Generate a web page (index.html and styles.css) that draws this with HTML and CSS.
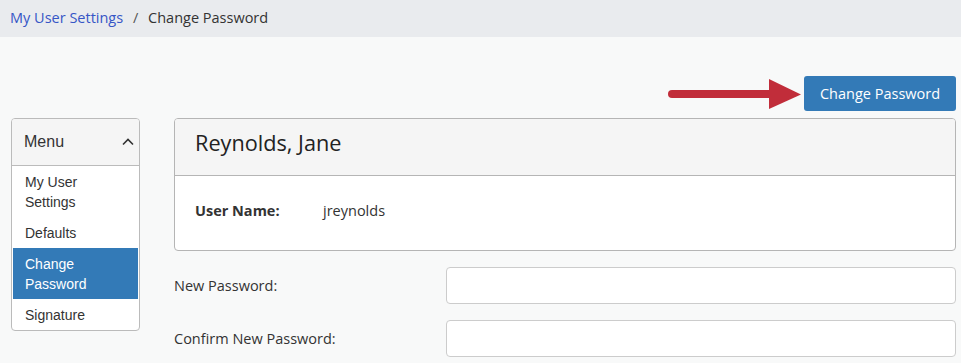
FILE: index.html
```html
<!DOCTYPE html>
<html lang="en">
<head>
  <meta charset="UTF-8">
  <meta name="viewport" content="width=device-width, initial-scale=1.0">
  <title>Change Password</title>
  <link rel="stylesheet" href="styles.css">
</head>
<body>
  <!-- Breadcrumb -->
  <div class="breadcrumb">
    <a href="#">My User Settings</a>
    <span class="sep">/</span>
    <span class="current">Change Password</span>
  </div>

  <div class="page">
    <!-- Toolbar -->
    <div class="toolbar">
      <svg class="arrow" width="134" height="32" viewBox="0 0 134 32">
        <line x1="4" y1="16" x2="104" y2="16" stroke="#c12d3a" stroke-width="8" stroke-linecap="round"/>
        <polygon points="101,1 133,16.5 101,31" fill="#c12d3a"/>
      </svg>
      <button class="btn-primary">Change Password</button>
    </div>

    <div class="layout">
      <!-- Sidebar Menu -->
      <div class="menu">
        <div class="menu-header">
          <span>Menu</span>
          <svg width="12" height="8" viewBox="0 0 12 8">
            <polyline points="1,6.5 6,1.5 11,6.5" fill="none" stroke="#333" stroke-width="1.6"/>
          </svg>
        </div>
        <a class="menu-item" href="#">My User Settings</a>
        <a class="menu-item" href="#">Defaults</a>
        <a class="menu-item active" href="#">Change Password</a>
        <a class="menu-item" href="#">Signature</a>
      </div>

      <!-- Main Content -->
      <div class="main">
        <div class="card">
          <div class="card-header">Reynolds, Jane</div>
          <div class="card-body">
            <span class="field-label">User Name:</span>
            <span class="field-value">jreynolds</span>
          </div>
        </div>

        <div class="form-row">
          <label for="newPassword">New Password:</label>
          <input type="password" id="newPassword">
        </div>
        <div class="form-row">
          <label for="confirmPassword">Confirm New Password:</label>
          <input type="password" id="confirmPassword">
        </div>
      </div>
    </div>
  </div>
</body>
</html>
```

FILE: styles.css
```css
body {
  font-family: "Open Sans", "Segoe UI", sans-serif;
  font-size: 14.5px;
  margin: 0;
  padding: 0;
  background: #f8f9f9;
  color: #333;
}

.breadcrumb {
  height: 37px;
  line-height: 36px;
  padding-left: 10px;
  background: #e9ebee;
  color: #333;
}

.breadcrumb a {
  color: #3656c6;
  text-decoration: none;
}

.breadcrumb .sep {
  margin: 0 6px;
  color: #555;
}

.page {
  padding: 39px 5px 0 11px;
}

.toolbar {
  display: flex;
  justify-content: flex-end;
  align-items: center;
  height: 35px;
}

.arrow {
  display: block;
  margin-right: 2px;
}

.btn-primary {
  height: 35px;
  width: 152px;
  padding: 0;
  background: #337ab7;
  color: #fff;
  font-family: inherit;
  font-size: 14.5px;
  border: none;
  border-radius: 3px;
  cursor: pointer;
}

.layout {
  display: grid;
  grid-template-columns: 129px 1fr;
  column-gap: 34px;
  align-items: start;
  margin-top: 7px;
}

/* Sidebar */
.menu {
  font-family: "Liberation Sans", Arial, sans-serif;
  background: #fff;
  border: 1px solid #bbb;
  border-radius: 4px;
  overflow: hidden;
}

.menu-header {
  display: flex;
  justify-content: space-between;
  align-items: center;
  height: 46px;
  padding: 0 5px 0 12px;
  background: #f5f5f5;
  border-bottom: 1px solid #bbb;
  font-size: 16px;
}

.menu-item {
  display: block;
  padding: 6px 12px 5px 13px;
  line-height: 20px;
  font-size: 14px;
  color: #333;
  text-decoration: none;
}

.menu-item.active {
  background: #337ab7;
  color: #fff;
  margin: 0 1px;
  padding-left: 12px;
}

/* Main card */
.card {
  background: #fff;
  border: 1px solid #b5b5b5;
  border-radius: 4px;
  overflow: hidden;
}

.card-header {
  padding: 9px 20px 17px;
  line-height: 30px;
  font-size: 21.7px;
  color: #222;
  background: #f5f5f5;
  border-bottom: 1px solid #b5b5b5;
}

.card-body {
  display: flex;
  padding: 25px 20px 29px;
  line-height: 20px;
}

.field-label {
  width: 128px;
  font-weight: bold;
}

.form-row {
  display: grid;
  grid-template-columns: 272px 1fr;
  align-items: center;
  margin-top: 16px;
}

.form-row input {
  height: 37px;
  box-sizing: border-box;
  border: 1px solid #ccc;
  border-radius: 4px;
  background: #fff;
  padding: 6px 12px;
  font-size: 14px;
}
```
